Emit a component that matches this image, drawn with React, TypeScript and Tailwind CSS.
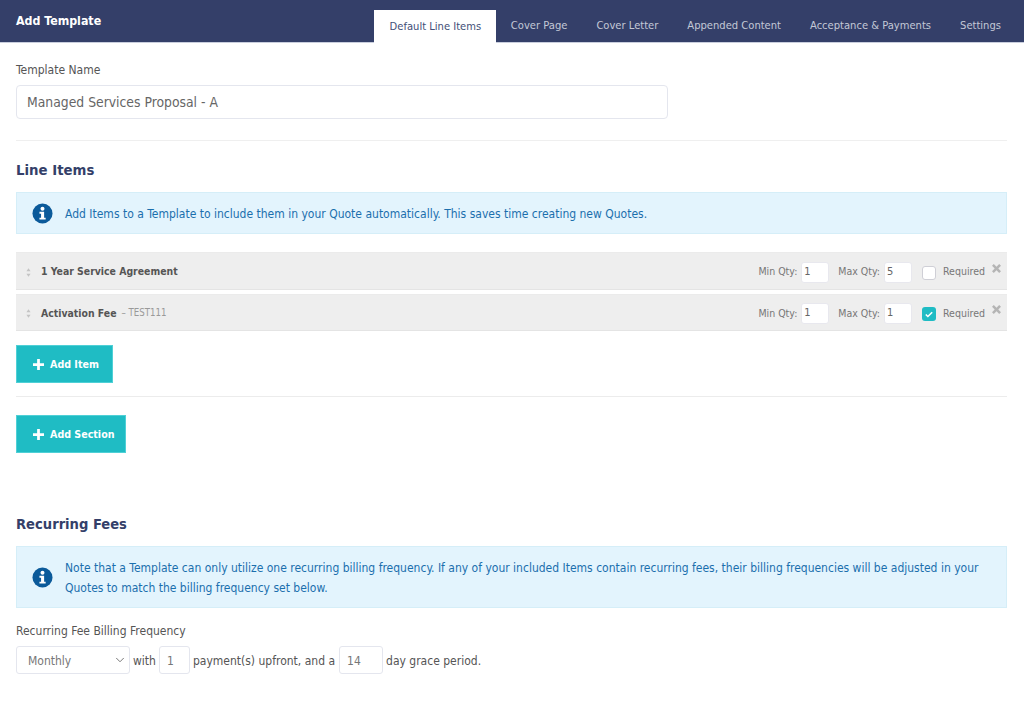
import { ChevronDown } from 'lucide-react'

const font = { fontFamily: '"DejaVu Sans", sans-serif', fontStretch: 'condensed' }

function InfoIcon() {
  return (
    <svg viewBox="0 0 22 22" className="w-[21px] h-[21px] shrink-0">
      <circle cx="11" cy="11" r="10.5" fill="#0b5a9a" />
      <circle cx="11" cy="6" r="2.1" fill="#fff" />
      <path d="M7.8 9.2h4.9v6.2h1.6v2H7.8v-2h1.7v-4.2H7.8z" fill="#fff" />
    </svg>
  )
}

function Plus() {
  return (
    <svg viewBox="0 0 12 12" className="w-[11px] h-[11px]">
      <path d="M4.5 0h3v4.5H12v3H7.5V12h-3V7.5H0v-3h4.5z" fill="#fff" />
    </svg>
  )
}

function Grip() {
  return (
    <svg viewBox="0 0 6 10" className="w-[5px] h-[9px] shrink-0">
      <path d="M3 0l2.5 3.6h-5zM3 10L.5 6.4h5z" fill="#c4c4c4" />
    </svg>
  )
}

function Close() {
  return (
    <svg viewBox="0 0 10 10" className="w-[9px] h-[9px]">
      <path d="M2 0l3 3 3-3 2 2-3 3 3 3-2 2-3-3-3 3-2-2 3-3-3-3z" fill="#b5b5b5" />
    </svg>
  )
}

function Qty({ value }: { value: string }) {
  return (
    <div className="w-[28px] h-[21px] bg-white border border-[#e8e8ee] rounded-[3px] pl-[2px] flex items-center text-[11px] text-[#666]">
      {value}
    </div>
  )
}

function Row({ name, code, min, max, required, heightClass }: any) {
  return (
    <div className={`${heightClass} pt-[2px] bg-[#eeeeee] border-b border-[#e4e4e4] border-t border-t-[#ebebeb] flex items-center pl-[10px] pr-[6px]`}>
      <Grip />
      <span className="ml-[10px] font-bold text-[10.4px] text-[#555]">{name}</span>
      {code && <span className="ml-[5px] text-[9.6px] text-[#999]">– {code}</span>}
      <div className="ml-auto flex items-center text-[10.5px] text-[#777]">
        <span>Min Qty:</span>
        <div className="ml-[4px]"><Qty value={min} /></div>
        <span className="ml-[9px]">Max Qty:</span>
        <div className="ml-[4px]"><Qty value={max} /></div>
        {required ? (
          <div className="ml-[10px] w-[14px] h-[14px] mt-[1px] rounded-[3px] bg-[#1fbcc4] flex items-center justify-center">
            <svg viewBox="0 0 10 8" className="w-[8px] h-[7px]">
              <path d="M1 4l2.6 2.5L9 1.2" fill="none" stroke="#fff" strokeWidth="2" />
            </svg>
          </div>
        ) : (
          <div className="ml-[10px] w-[14px] h-[14px] mt-[1px] rounded-[3px] bg-white border border-[#cfcfd6]" />
        )}
        <span className="ml-[7px]">Required</span>
        <div className="ml-[7px] -mt-[8px] flex"><Close /></div>
      </div>
    </div>
  )
}

function Btn({ label, widthClass }: { label: string; widthClass: string }) {
  return (
    <div className={`${widthClass} h-[38px] bg-[#1fbcc4] border border-[#4fd0d6] flex items-center pl-[16px] gap-[6px] text-white font-bold text-[10.6px]`}>
      <Plus />
      <span className="pt-[1px]">{label}</span>
    </div>
  )
}

export default function App() {
  const tabs = ['Cover Page', 'Cover Letter', 'Appended Content', 'Acceptance & Payments', 'Settings']

  return (
    <div className="w-[1024px] h-[702px] overflow-hidden bg-white text-[12px] text-[#555]" style={font}>
      {/* Header */}
      <div className="h-[43px] bg-[#343f69] flex justify-between pl-[16px] pr-[8.5px] border-b border-[#c9cedd]">
        <div className="pt-[13px] text-[12.3px] font-bold text-white leading-[17px]">Add Template</div>
        <div className="flex items-end text-[11.1px]">
          <div className="h-[33px] -mb-px w-[122px] pt-[2px] bg-white flex items-center justify-center text-[#434f78]">
            Default Line Items
          </div>
          {tabs.map(t => (
            <div key={t} className="h-[33px] px-[14.5px] pt-[2px] flex items-center text-[#c3c8d6]">{t}</div>
          ))}
        </div>
      </div>

      <div className="pl-[16px] pr-[17px]">
        <div className="mt-[19px] leading-[16px] text-[#555]">Template Name</div>
        <div className="mt-[7px] w-[652px] h-[34px] border border-[#e4e6ee] rounded-[4px] pl-[10px] flex items-center text-[13.8px] text-[#666]">
          Managed Services Proposal - A
        </div>
        <div className="mt-[21px] border-t border-[#efefef]" />

        <h2 className="mt-[20px] text-[14.8px] leading-[18px] font-bold text-[#343f69]">Line Items</h2>
        <div className="mt-[13px] h-[42px] bg-[#e3f4fd] border border-[#d5eef8] pl-[15px] flex items-center gap-[12px] text-[#1b6fad]">
          <InfoIcon />
          <span className="pt-px">Add Items to a Template to include them in your Quote automatically. This saves time creating new Quotes.</span>
        </div>

        <div className="mt-[18px] flex flex-col gap-[4px]">
          <Row name="1 Year Service Agreement" min="1" max="5" heightClass="h-[38px]" />
          <Row name="Activation Fee" code="TEST111" min="1" max="1" required heightClass="h-[37px]" />
        </div>

        <div className="mt-[14px]"><Btn label="Add Item" widthClass="w-[97px]" /></div>
        <div className="mt-[13px] border-t border-[#ececec]" />
        <div className="mt-[18px]"><Btn label="Add Section" widthClass="w-[110px]" /></div>

        <h2 className="mt-[62px] text-[14.6px] leading-[18px] font-bold text-[#343f69]">Recurring Fees</h2>
        <div className="mt-[13px] h-[62px] bg-[#e3f4fd] border border-[#d5eef8] pl-[15px] pr-[20px] flex items-center gap-[12px] text-[#1b6fad] leading-[20px]">
          <InfoIcon />
          <div className="pt-px">
            Note that a Template can only utilize one recurring billing frequency. If any of your included Items contain recurring fees, their billing frequencies will be adjusted in your Quotes to match the billing frequency set below.
          </div>
        </div>

        <div className="mt-[15px] leading-[16px] text-[#555]">Recurring Fee Billing Frequency</div>
        <div className="mt-[7px] flex items-center">
          <div className="w-[114px] h-[28px] border border-[#e4e6ee] rounded-[3px] pl-[11px] pr-[2px] flex items-center justify-between text-[#777]">
            <span className="pt-[2px]">Monthly</span>
            <ChevronDown size={14} strokeWidth={1.5} className="text-[#666]" />
          </div>
          <span className="ml-[3px] pt-[2px]">with</span>
          <div className="ml-[3px] w-[31px] h-[28px] border border-[#e4e6ee] rounded-[3px] pl-[7px] pt-[2px] flex items-center text-[#777]">1</div>
          <span className="ml-[3px] pt-[2px]">payment(s) upfront, and a</span>
          <div className="ml-[4px] w-[44px] h-[28px] border border-[#e4e6ee] rounded-[3px] pl-[7px] pt-[2px] flex items-center text-[#777]">14</div>
          <span className="ml-[3px] pt-[2px]">day grace period.</span>
        </div>
      </div>
    </div>
  )
}
